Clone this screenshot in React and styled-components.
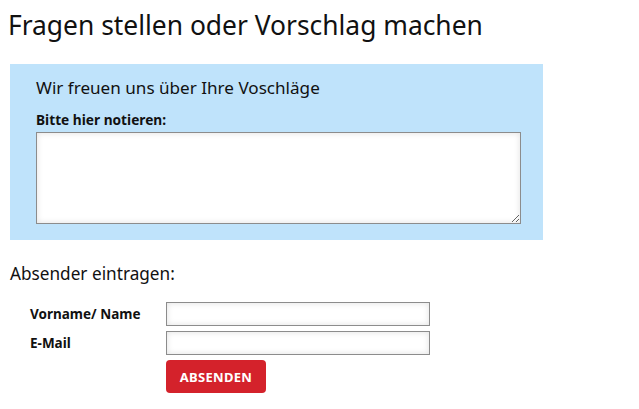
import React from "react";
import styled, { createGlobalStyle } from "styled-components";

const Global = createGlobalStyle`
  body {
    margin: 0;
    background: #fff;
    font-family: "Noto Sans", "DejaVu Sans", sans-serif;
    color: #111;
  }
`;

const Page = styled.div`
  padding: 8px 0 0 8px;
`;

const Title = styled.h1`
  margin: 0;
  font-size: 26.4px;
  font-weight: 400;
  line-height: 34px;
`;

const Panel = styled.div`
  width: 533px;
  margin: 22px 0 0 2px;
  padding: 12px 22px 16px 26px;
  box-sizing: border-box;
  background: #bfe3fb;
`;

const Lead = styled.h2`
  margin: 0;
  font-size: 17.1px;
  font-weight: 400;
  line-height: 24px;
`;

const FieldLabel = styled.label`
  display: block;
  margin-top: 12px;
  font-size: 13.7px;
  font-weight: 700;
  line-height: 16px;
`;

const TextArea = styled.textarea`
  display: block;
  width: 485px;
  height: 92px;
  margin-top: 4px;
  box-sizing: border-box;
  border: 1px solid #8c8c8c;
  background: #fff;
  box-shadow: inset 0 0 6px rgba(0, 0, 0, 0.12);
  resize: vertical;
  font-family: inherit;
`;

const Sender = styled.div`
  margin-top: 22px;
  padding-left: 2px;
`;

const SenderTitle = styled.h3`
  margin: 0;
  font-size: 17.2px;
  font-weight: 400;
  line-height: 24px;
`;

const Form = styled.div`
  display: grid;
  grid-template-columns: 136px 264px;
  row-gap: 5px;
  margin: 16px 0 0 20px;
  align-items: center;
`;

const RowLabel = styled.label`
  font-size: 13.5px;
  font-weight: 700;
  line-height: 16px;
`;

const Input = styled.input`
  width: 264px;
  height: 24px;
  box-sizing: border-box;
  border: 1px solid #8c8c8c;
  background: #fff;
  box-shadow: inset 0 0 6px rgba(0, 0, 0, 0.12);
  padding: 0 4px;
  font-family: inherit;
`;

const Submit = styled.button`
  grid-column: 2;
  justify-self: start;
  width: 100px;
  height: 33px;
  border: none;
  border-radius: 4px;
  background: #d4222b;
  color: #fff;
  font-family: inherit;
  font-size: 13px;
  font-weight: 700;
  letter-spacing: 0.3px;
`;

export default function App() {
  return (
    <Page>
      <Global />
      <Title>Fragen stellen oder Vorschlag machen</Title>
      <Panel>
        <Lead>Wir freuen uns über Ihre Voschläge</Lead>
        <FieldLabel htmlFor="msg">Bitte hier notieren:</FieldLabel>
        <TextArea id="msg" />
      </Panel>
      <Sender>
        <SenderTitle>Absender eintragen:</SenderTitle>
        <Form>
          <RowLabel htmlFor="name">Vorname/ Name</RowLabel>
          <Input id="name" type="text" />
          <RowLabel htmlFor="mail">E-Mail</RowLabel>
          <Input id="mail" type="text" />
          <Submit>ABSENDEN</Submit>
        </Form>
      </Sender>
    </Page>
  );
}
